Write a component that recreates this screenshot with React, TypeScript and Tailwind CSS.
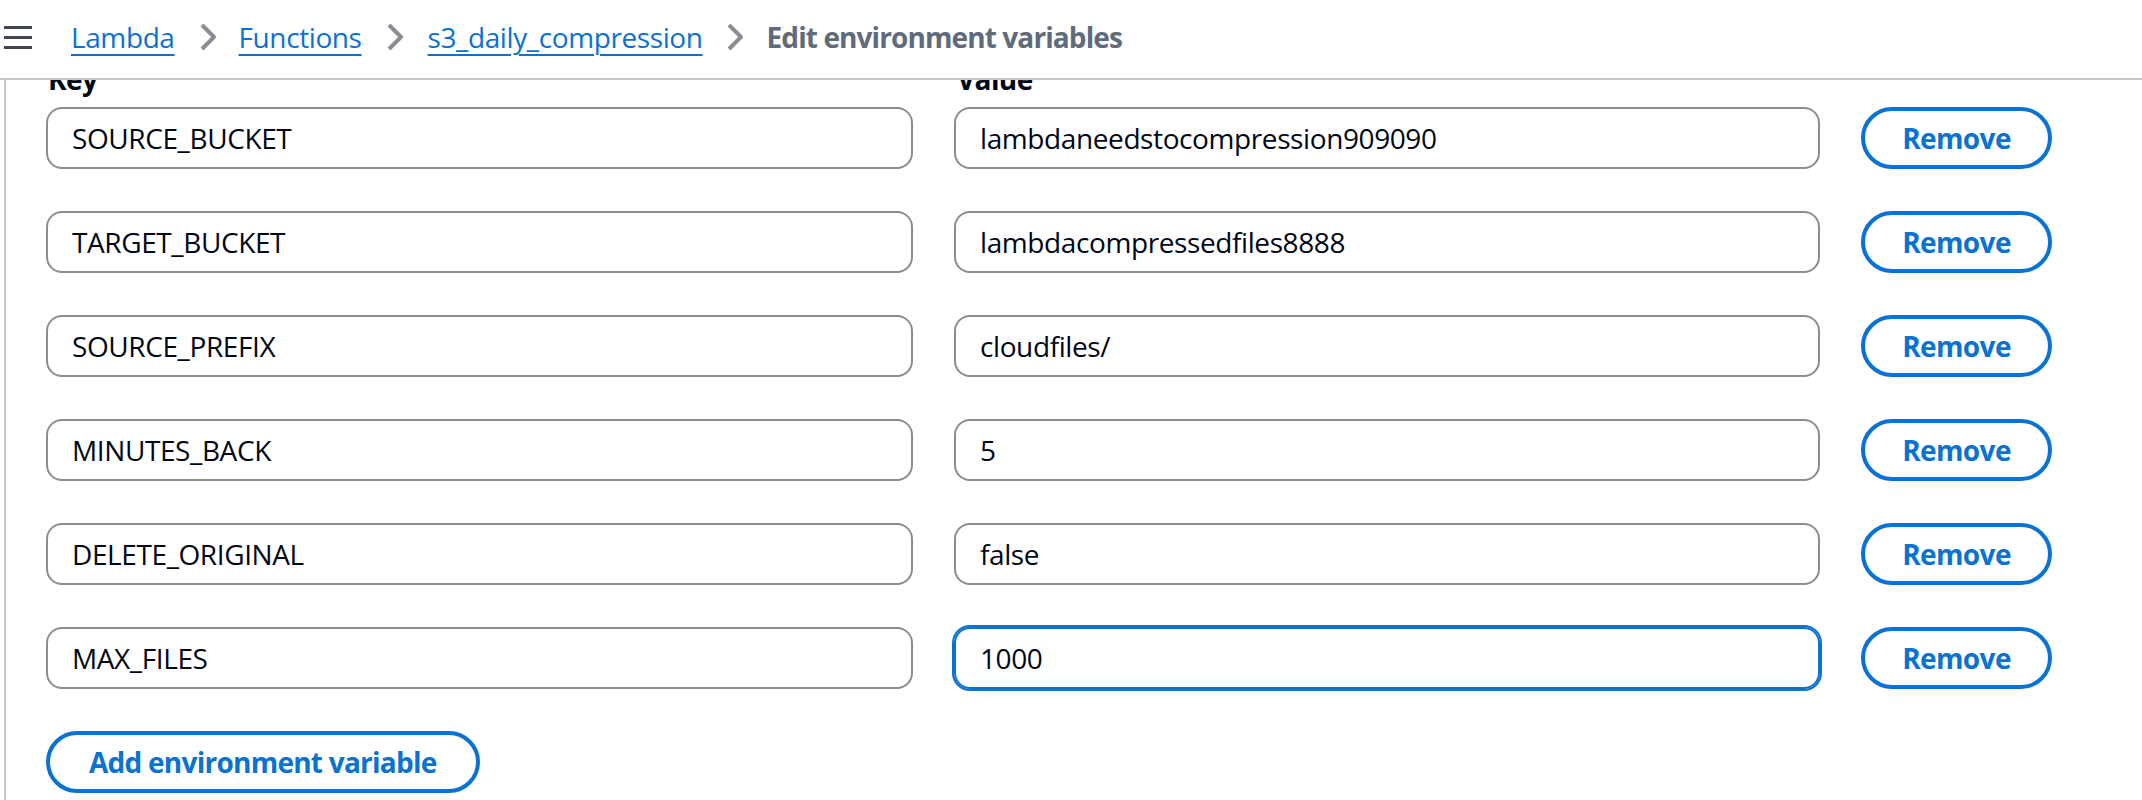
import React from "react";

const rows: [string, string][] = [
  ["SOURCE_BUCKET", "lambdaneedstocompression909090"],
  ["TARGET_BUCKET", "lambdacompressedfiles8888"],
  ["SOURCE_PREFIX", "cloudfiles/"],
  ["MINUTES_BACK", "5"],
  ["DELETE_ORIGINAL", "false"],
  ["MAX_FILES", "1000"],
];

function Chevron({ className }: { className?: string }) {
  return (
    <svg viewBox="0 0 16 16" className={className} fill="none">
      <path d="m5 2 6 6-6 6" stroke="#8c8c94" strokeWidth="2" strokeLinejoin="round" />
    </svg>
  );
}

function Header() {
  return (
    <header className="h-[80px] shrink-0 border-b-2 border-[#c6c6cd] flex items-center pb-[4px] bg-white">
      <svg viewBox="0 0 28 23" className="ml-[4px] w-[28px] h-[23px]">
        <rect x="0" y="0" width="28" height="3" fill="#424650" />
        <rect x="0" y="10" width="28" height="3" fill="#424650" />
        <rect x="0" y="20" width="28" height="3" fill="#424650" />
      </svg>
      <nav className="ml-[39px] flex items-center text-[28px] leading-[40px] tracking-[-0.4px]">
        <a className="text-[#0972d3] underline decoration-2 underline-offset-[6px]">Lambda</a>
        <Chevron className="w-[32px] h-[32px] ml-[17px] mr-[15px]" />
        <a className="text-[#0972d3] underline decoration-2 underline-offset-[6px]">Functions</a>
        <Chevron className="w-[32px] h-[32px] ml-[17px] mr-[17px]" />
        <a className="text-[#0972d3] underline decoration-2 underline-offset-[6px]">s3_daily_compression</a>
        <Chevron className="w-[32px] h-[32px] ml-[16px] mr-[16px]" />
        <span className="font-bold tracking-[-0.9px] text-[#5f6b7a]">Edit environment variables</span>
      </nav>
    </header>
  );
}

function Row({ k, v, focused }: { k: string; v: string; focused?: boolean }) {
  return (
    <div className="flex items-center gap-[41px]">
      <input
        readOnly
        value={k}
        className="w-[867px] h-[62px] rounded-[16px] border-2 border-[#8c8c94] px-[24px] text-[28px] tracking-[-0.4px] text-[#000716] outline-none"
      />
      <input
        readOnly
        value={v}
        className={
          focused
            ? "w-[866px] h-[62px] rounded-[16px] border-2 border-[#0972d3] ring-2 ring-[#0972d3] px-[24px] text-[28px] tracking-[-0.4px] text-[#000716] outline-none"
            : "w-[866px] h-[62px] rounded-[16px] border-2 border-[#8c8c94] px-[24px] text-[28px] tracking-[-0.4px] text-[#000716] outline-none"
        }
      />
      <button className="w-[191px] h-[62px] rounded-full border-4 border-[#0972d3] text-[#0972d3] font-bold tracking-[-0.6px] text-[28px] leading-none">
        Remove
      </button>
    </div>
  );
}

export default function App() {
  return (
    <div className="w-[2142px] h-[800px] overflow-hidden bg-white flex flex-col font-['Open_Sans'] text-[#000716]">
      <Header />
      <div className="flex-1 min-h-0 overflow-hidden flex">
        <div className="ml-[4px] w-[2px] bg-[#c6c6cd] shrink-0" />
        <main className="pl-[40px] flex flex-col">
          <div className="-mt-[21px] flex gap-[41px] text-[28px] leading-[40px] font-bold tracking-[-0.6px]">
            <div className="w-[867px] pl-[2px]">Key</div>
            <div className="w-[866px] pl-[3px]">Value</div>
          </div>
          <div className="mt-[8px] flex flex-col gap-[42px]">
            {rows.map(([k, v], i) => (
              <Row key={k} k={k} v={v} focused={i === rows.length - 1} />
            ))}
          </div>
          <div className="mt-[42px]">
            <button className="h-[62px] px-[39px] rounded-full border-4 border-[#0972d3] text-[#0972d3] font-bold tracking-[-0.75px] text-[28px] leading-none">
              Add environment variable
            </button>
          </div>
        </main>
      </div>
    </div>
  );
}
